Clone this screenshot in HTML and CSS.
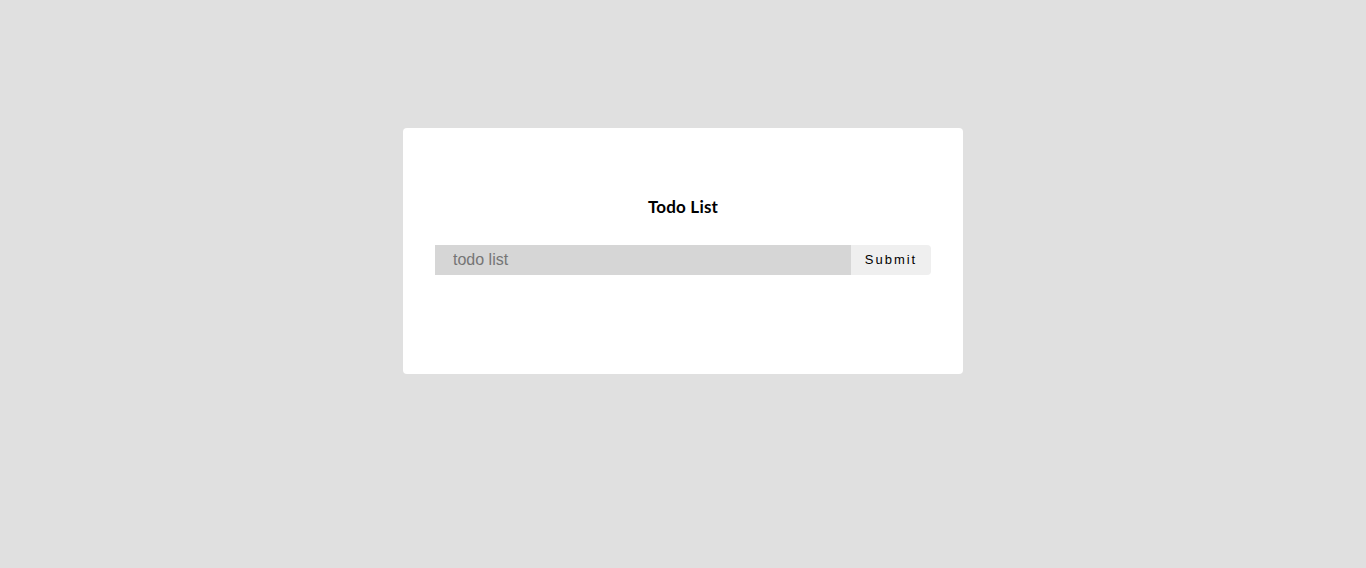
FILE: index.html
```html
<!DOCTYPE html>
<html>
<head>
<meta charset="utf-8">
<link rel="stylesheet" href="styles.css">
</head>
<body>
<div class="card">
  <h1 class="title">Todo List</h1>
  <form class="form">
    <input class="input" type="text" placeholder="todo list">
    <button class="btn" type="button">Submit</button>
  </form>
</div>
</body>
</html>
```
FILE: styles.css
```css
html, body {
  margin: 0;
  padding: 0;
  background: #e0e0e0;
  height: 100%;
}
body {
  padding-top: 128px;
  box-sizing: border-box;
}
.card {
  width: 560px;
  height: 246px;
  margin: 0 auto;
  background: #fff;
  border-radius: 4px;
  box-sizing: border-box;
  padding: 32px;
}
.title {
  margin: 37px 0 28px;
  font-family: "Lato", "Open Sans", sans-serif;
  font-weight: 700;
  font-size: 17px;
  line-height: 20px;
  letter-spacing: 0.2px;
  text-align: center;
  color: #000;
}
.form {
  display: flex;
  height: 30px;
}
.input {
  flex: 1;
  border: none;
  outline: none;
  background: #d6d6d6;
  padding: 0 18px;
  margin: 0;
  height: 30px;
  font-family: "Liberation Sans", Arial, sans-serif;
  font-size: 16px;
  color: #333;
}
.input::placeholder {
  color: #757575;
}
.btn {
  width: 80px;
  height: 30px;
  border: none;
  margin: 0;
  padding: 0 0 1px 0;
  background: #efefef;
  border-radius: 0 4px 4px 0;
  font-family: "Liberation Sans", Arial, sans-serif;
  font-size: 13px;
  letter-spacing: 2px;
  color: #000;
}
```
